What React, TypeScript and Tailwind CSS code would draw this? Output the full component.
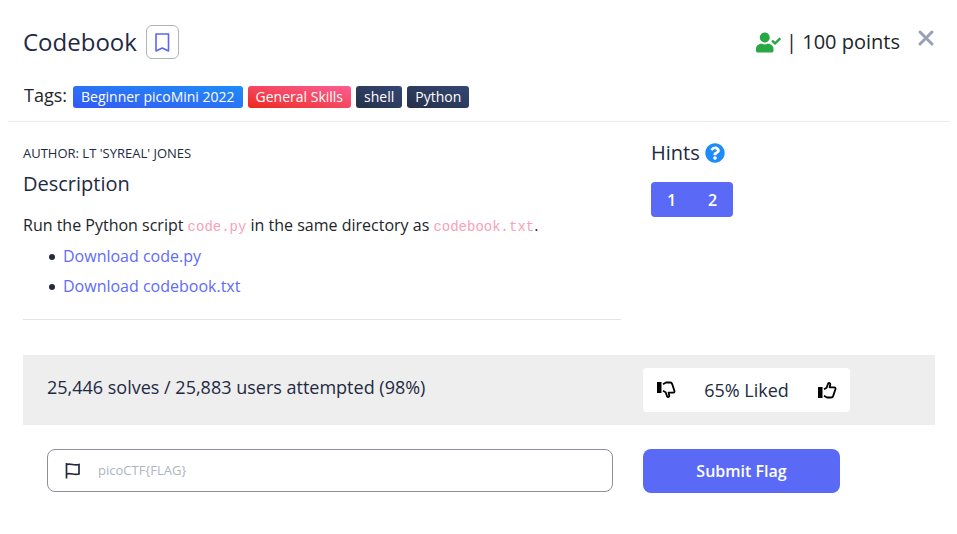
import { FaUserCheck, FaQuestionCircle } from "react-icons/fa";

const tags = [
  { label: "Beginner picoMini 2022", tone: "from-[#3358f4] to-[#1d8cf8]" },
  { label: "General Skills", tone: "from-[#ec250d] to-[#fd5d93]" },
  { label: "shell", tone: "from-[#263148] to-[#344675]" },
  { label: "Python", tone: "from-[#263148] to-[#344675]" },
];

const downloads = ["code.py", "codebook.txt"];

function Bookmark() {
  return (
    <svg width="16" height="20" viewBox="0 0 16 20" fill="none" stroke="#5a67f5" strokeWidth="1.6" aria-hidden="true">
      <path d="M2 2h12.5V19l-6.25-3L2 19z" strokeLinejoin="round" />
    </svg>
  );
}

function Thumb({ down = false }: { down?: boolean }) {
  return (
    <svg width="20" height="20" viewBox="0 0 20 20" className={down ? "-scale-y-100" : ""} aria-hidden="true">
      <path d="M1 7h4.5v11H1z" fill="#000" />
      <path d="M7 9.2L9.6 7.8l1.6-4.4c.7-1 2.3-.4 2.1.9L12.6 7.4h4.6c1.2 0 1.6.9 1.2 1.9l-2.2 6.6c-.4 1.2-1 1.6-2 1.6H10L7 15.8" fill="none" stroke="#000" strokeWidth="1.8" strokeLinejoin="round" />
    </svg>
  );
}

function Flag() {
  return (
    <svg width="16" height="18" viewBox="0 0 16 18" fill="none" stroke="#222a42" strokeWidth="1.7" aria-hidden="true">
      <path d="M1.5 1v15.5M1.5 2.5c4.5-1.2 7.5 1.2 12.5 0v9.5c-5 1.2-8-1.2-12.5 0" />
    </svg>
  );
}

export default function App() {
  return (
    <main className="pt-6 pr-[7px] pl-2 font-['Open_Sans','Noto_Sans',sans-serif] text-base text-[#222a42]">
      <header className="border-b border-[#e9ecef] pr-[14px] pl-[15px] pb-[13px]">
        <div className="flex h-9 items-center">
          <h1 className="text-2xl">Codebook</h1>
          <button aria-label="Bookmark" className="ml-[9px] flex h-[34px] w-[33px] items-center justify-center rounded-md border border-[#adb5bd]">
            <Bookmark />
          </button>
          <div className="ml-auto flex items-center gap-[5px] text-xl text-[#212529]">
            <FaUserCheck size={25} color="#28a745" />
            <span>| 100 points</span>
          </div>
          <button aria-label="Close" className="ml-4 pb-2">
            <svg width="20" height="20" viewBox="0 0 20 20" stroke="#9a9fb8" strokeWidth="3" strokeLinecap="round" aria-hidden="true">
              <path d="M4 4l12 12M16 4L4 16" />
            </svg>
          </button>
        </div>
        <div className="mt-[22px] flex items-end gap-[5px] pl-px">
          <span className="pr-px text-lg leading-[26px] text-[#212529]">Tags:</span>
          {tags.map((t) => (
            <span key={t.label} className={"rounded-[3px] bg-linear-to-tr px-2 text-sm leading-[22px] font-medium text-white " + t.tone}>
              {t.label}
            </span>
          ))}
        </div>
      </header>

      <div className="grid grid-cols-3">
        <div className="col-span-2 px-[15px]">
          <section className="border-b border-[#e4e4e6] pt-5 pb-[18px]">
            <p className="text-[13px] leading-[22px]">AUTHOR: LT 'SYREAL' JONES</p>
            <h2 className="mt-1 text-xl leading-8">Description</h2>
            <p className="mt-[10px] mb-px leading-[30px] text-[#212529]">
              Run the Python script <code className="font-['Liberation_Mono',monospace] text-sm text-[#f7a1b8]">code.py</code> in the same directory as{" "}
              <code className="font-['Liberation_Mono',monospace] text-sm text-[#f7a1b8]">codebook.txt</code>.
            </p>
            <ul className="pl-[26px] leading-[30px]">
              {downloads.map((f) => (
                <li key={f} className="flex items-center gap-2 before:mt-[2px] before:size-[6px] before:rounded-full before:bg-[#222a42]">
                  <a href={"#" + f} className="text-[#5e6cf8]">Download {f}</a>
                </li>
              ))}
            </ul>
          </section>
        </div>
        <aside className="px-[15px] pt-4">
          <h2 className="flex items-center gap-[5px] text-xl leading-[30px]">
            Hints <FaQuestionCircle size={20} color="#1d8cf8" />
          </h2>
          <div className="mt-[14px] inline-flex overflow-hidden rounded-[4px] bg-[#5a69f6] text-base font-semibold text-white">
            <button className="h-[35px] w-[41px]">1</button>
            <button className="h-[35px] w-[41px]">2</button>
          </div>
        </aside>
      </div>

      <div className="mx-[15px]">
        <div className="mt-[35px] grid h-[70px] grid-cols-3 bg-[#eeeeee] px-[9px]">
          <p className="col-span-2 px-[15px] pt-[18px] text-lg">25,446 solves / 25,883 users attempted (98%)</p>
          <div className="px-[15px] pt-[13px]">
            <div className="flex h-11 w-[207px] items-center justify-between rounded-[4px] bg-white px-[13px] text-lg">
              <button aria-label="Dislike"><Thumb down /></button>
              <span>65% Liked</span>
              <button aria-label="Like"><Thumb /></button>
            </div>
          </div>
        </div>

        <form className="mt-6 grid grid-cols-3 px-[9px]" onSubmit={(e) => e.preventDefault()}>
          <div className="col-span-2 px-[15px]">
            <label className="flex h-[43px] items-center rounded-lg border border-[#8f8f9d] pl-[17px]">
              <Flag />
              <input aria-label="Flag" placeholder="picoCTF{FLAG}" className="ml-[17px] min-w-0 flex-1 pt-px text-[13px] outline-none placeholder:text-[#adb5bd]" />
            </label>
          </div>
          <div className="px-[15px]">
            <button type="submit" className="h-11 w-[197px] rounded-lg bg-[#5a69f6] text-base font-semibold text-white">Submit Flag</button>
          </div>
        </form>
      </div>
    </main>
  );
}
